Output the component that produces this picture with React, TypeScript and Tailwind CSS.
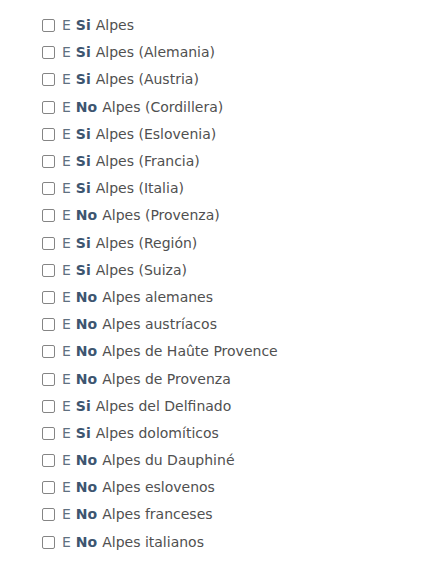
const items: [boolean, string][] = [
  [true, 'Alpes'],
  [true, 'Alpes (Alemania)'],
  [true, 'Alpes (Austria)'],
  [false, 'Alpes (Cordillera)'],
  [true, 'Alpes (Eslovenia)'],
  [true, 'Alpes (Francia)'],
  [true, 'Alpes (Italia)'],
  [false, 'Alpes (Provenza)'],
  [true, 'Alpes (Región)'],
  [true, 'Alpes (Suiza)'],
  [false, 'Alpes alemanes'],
  [false, 'Alpes austríacos'],
  [false, 'Alpes de Haûte Provence'],
  [false, 'Alpes de Provenza'],
  [true, 'Alpes del Delfinado'],
  [true, 'Alpes dolomíticos'],
  [false, 'Alpes du Dauphiné'],
  [false, 'Alpes eslovenos'],
  [false, 'Alpes franceses'],
  [false, 'Alpes italianos'],
];

export default function App() {
  return (
    <div className="min-h-[564px] bg-white pl-[42px] pt-[12px]" style={{ fontFamily: '"DejaVu Sans", Verdana, sans-serif' }}>
      <ul className="flex flex-col">
        {items.map(([yes, label], i) => (
          <li key={i} className="flex h-[27.2px] items-center text-[14px] text-[#505050]">
            <span className="mr-[7px] box-border h-[13px] w-[13px] rounded-[2px] border border-[#858585] bg-white" />
            <span className="text-[#607080]">E</span>
            <span className="ml-[5px] font-bold text-[#3d5570]">{yes ? 'Si' : 'No'}</span>
            <span className="ml-[5px]">{label}</span>
          </li>
        ))}
      </ul>
    </div>
  );
}
